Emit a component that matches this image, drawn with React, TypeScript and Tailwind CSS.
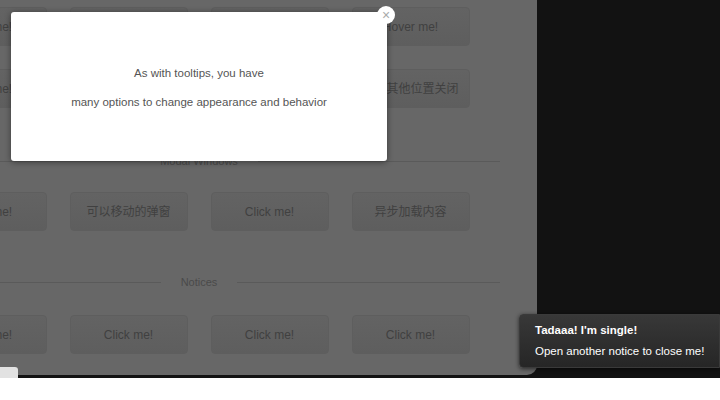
import React from "react";

const rows: string[][] = [
  ["Click me!", "Click me!", "Click me!", "Hover me!"],
  ["Click me!", "Click me!", "Click me!", "点击其他位置关闭"],
];
const modalRow = ["Click me!", "可以移动的弹窗", "Click me!", "异步加载内容"];
const noticeRow = ["Click me!", "Click me!", "Click me!", "Click me!"];

function Btn({ label }: { label: string }) {
  return (
    <div className="flex h-[39px] w-[118px] items-center justify-center rounded-[4px] border border-[#5e5e5e] bg-gradient-to-b from-[#636363] to-[#5e5e5e] text-[12px] text-[#404040]">
      {label}
    </div>
  );
}

function Row({ items, className }: { items: string[]; className?: string }) {
  return (
    <div className={"flex justify-center gap-[23px] " + (className ?? "")}>
      {items.map((label, i) => (
        <Btn key={i} label={label} />
      ))}
    </div>
  );
}

function Separator({ label, className }: { label: string; className?: string }) {
  return (
    <div className={"flex h-[11px] items-center gap-[20px] " + (className ?? "")}>
      <div className="h-px flex-1 bg-[#5a5a5a]" />
      <span className="text-[11px] leading-none text-[#4a4a4a]">{label}</span>
      <div className="h-px flex-1 bg-[#5a5a5a]" />
    </div>
  );
}

export default function App() {
  return (
    <div
      className="relative h-[400px] w-[720px] overflow-hidden bg-white"
      style={{ fontFamily: '"Liberation Sans", Arial, "Noto Sans CJK SC", sans-serif' }}
    >
      <div className="h-[378px] bg-[#121212]">
        <div className="h-[375px] w-[537px] overflow-hidden rounded-br-[10px] bg-[#676767]">
          <div className="ml-[-102px] w-[602px] pt-[7px]">
            <Row items={rows[0]} />
            <Row items={rows[1]} className="mt-[23px]" />
            <Separator label="Modal Windows" className="mt-[48px]" />
            <Row items={modalRow} className="mt-[25px]" />
            <Separator label="Notices" className="mt-[46px]" />
            <Row items={noticeRow} className="mt-[27px]" />
          </div>
        </div>
      </div>

      <div className="absolute left-0 top-[367px] h-[11px] w-[18px] rounded-tr-[3px] bg-[#e2e2e2]" />

      <div className="absolute left-[11px] top-[12px] flex h-[149px] w-[376px] flex-col items-center justify-center gap-[16px] rounded-[3px] bg-white text-[11.5px] leading-[13px] text-[#555] shadow-[0_1px_6px_rgba(0,0,0,0.45)]">
        <p className="mt-[2px]">As with tooltips, you have</p>
        <p>many options to change appearance and behavior</p>
      </div>
      <div className="absolute left-[377px] top-[6px] flex h-[18px] w-[18px] items-center justify-center rounded-full bg-white text-[14px] leading-none text-[#aaa]">
        ×
      </div>

      <div className="absolute left-[519px] top-[314px] flex h-[54px] w-[201px] flex-col justify-center gap-[10px] rounded-l-[4px] border border-[#3a3a3a] bg-gradient-to-b from-[#383838] to-[#262626] pl-[15px] text-[11.5px] leading-none text-white shadow-[0_1px_4px_rgba(0,0,0,0.6)]">
        <p className="font-bold">Tadaaa! I'm single!</p>
        <p>Open another notice to close me!</p>
      </div>
    </div>
  );
}
